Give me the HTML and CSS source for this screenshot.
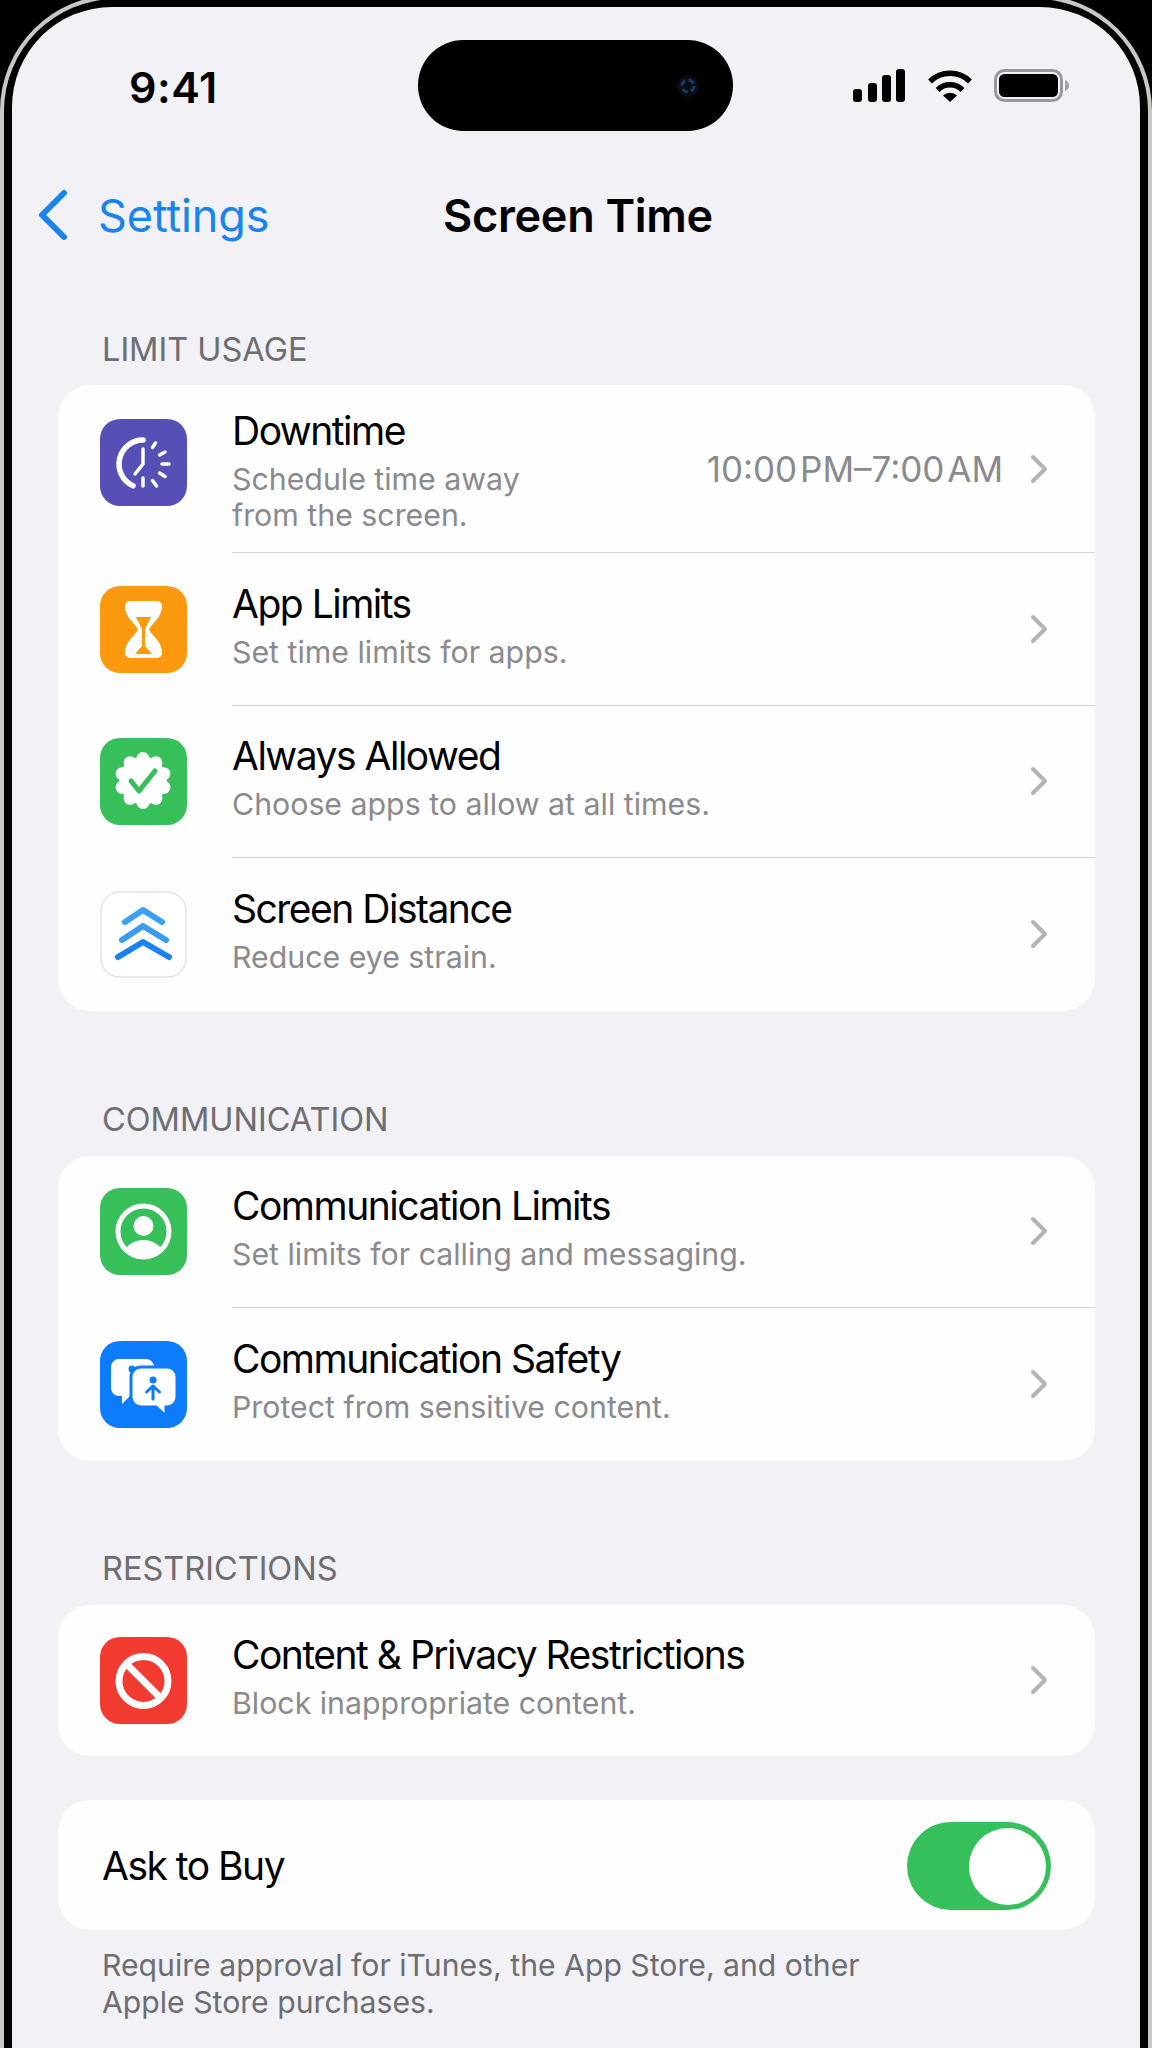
FILE: index.html
```html
<!DOCTYPE html>
<html lang="en">

<head>
    <meta charset="UTF-8">
    <meta name="viewport" content="width=device-width, initial-scale=1.0">
    <title>Screen Time</title>
    <link rel="stylesheet" href="styles.css">
</head>

<body>
    <div class="phone">
        <div class="screen">
            <header class="status">
                <span class="time">9:41</span>
                <div class="island">
                    <svg class="camera" viewBox="0 0 24 24">
                        <circle cx="12" cy="12" r="11" fill="#0a0c14" />
                        <circle cx="12" cy="12" r="6" fill="none" stroke="#1d3768" stroke-width="3" stroke-dasharray="6 3.4" />
                    </svg>
                </div>
                <div class="status-icons">
                    <svg width="52" height="33" viewBox="0 0 52 33" fill="#000">
                        <rect x="0" y="20" width="9" height="13" rx="3" />
                        <rect x="15" y="14" width="9" height="19" rx="3" />
                        <rect x="29" y="6" width="9" height="27" rx="3" />
                        <rect x="43" y="0" width="9" height="33" rx="3" />
                    </svg>
                    <svg width="44" height="33" viewBox="0 0 44 33" fill="none" stroke="#000" stroke-width="5.5">
                        <path d="M2 12.500A28.500 28.500 0 0 1 42 12.500" />
                        <path d="M9.600 21A17.500 17.500 0 0 1 34.400 21" />
                        <path d="M22 33L15 26.500A10 10 0 0 1 29 26.500Z" fill="#000" stroke="none" />
                    </svg>
                    <svg width="75" height="33" viewBox="0 0 75 33">
                        <rect x="1.500" y="1.500" width="66" height="30" rx="9" fill="none" stroke="#98989c" stroke-width="3" />
                        <rect x="5" y="5" width="59" height="23" rx="5.500" fill="#000" />
                        <path d="M71 11c2.500 .6 4 2.800 4 5.500s-1.500 4.900-4 5.500z" fill="#a4a4a8" />
                    </svg>
                </div>
            </header>

            <nav class="nav">
                <a class="back">
                    <svg width="30" height="52" viewBox="0 0 30 52" fill="none" stroke="#1a84ee" stroke-width="6" stroke-linecap="round" stroke-linejoin="round">
                        <path d="M26 4L4 26L26 48" />
                    </svg>
                    Settings
                </a>
                <h1>Screen Time</h1>
            </nav>

            <p class="label label-first">LIMIT USAGE</p>
            <section class="card">
                <div class="row row-tall">
                    <svg class="icon" viewBox="0 0 87 87">
                        <rect width="87" height="87" rx="20" fill="#5650b6" />
                        <g fill="none" stroke="#fff" stroke-linecap="round">
                            <path d="M43 21A24 24 0 0 0 33 66.800" stroke-width="5.500" />
                            <path d="M43 30V45L35 55" stroke-width="3.500" />
                            <path d="M43 59V67M52.500 28.500L55.500 24M59.500 36L65 33M62 45H69M59.500 54L65 57.500M52.500 61.500L56.500 67" stroke-width="3.500" />
                        </g>
                    </svg>
                    <div class="row-body">
                        <div class="text">
                            <div class="title">Downtime</div>
                            <div class="sub">Schedule time away<br>from the screen.</div>
                        </div>
                        <span class="value">10:00 PM–7:00 AM</span>
                        <svg class="chev" viewBox="0 0 18 30"><path d="M3 3L15 15L3 27" /></svg>
                    </div>
                </div>
                <div class="row">
                    <svg class="icon" viewBox="0 0 87 87">
                        <rect width="87" height="87" rx="20" fill="#fb9a0e" />
                        <path d="M30 15H57a5 5 0 0 1 5 5c0 12-10 17-13 23.500c3 6.500 13 11.500 13 23.500a5 5 0 0 1-5 5H30a5 5 0 0 1-5-5c0-12 10-17 13-23.500c-3-6.500-13-11.500-13-23.500a5 5 0 0 1 5-5z" fill="#fff" />
                        <path d="M36 31H51L45 43V60L52 68H35L42 60V43Z" fill="#fb9a0e" />
                    </svg>
                    <div class="row-body">
                        <div class="text">
                            <div class="title">App Limits</div>
                            <div class="sub">Set time limits for apps.</div>
                        </div>
                        <svg class="chev" viewBox="0 0 18 30"><path d="M3 3L15 15L3 27" /></svg>
                    </div>
                </div>
                <div class="row">
                    <svg class="icon" viewBox="0 0 87 87">
                        <rect width="87" height="87" rx="20" fill="#37bf5a" />
                        <g fill="#fff">
                            <circle cx="43" cy="42.500" r="24" />
                            <circle cx="43" cy="20.500" r="6.500" />
                            <circle cx="55.900" cy="24.700" r="6.500" />
                            <circle cx="63.900" cy="35.700" r="6.500" />
                            <circle cx="63.900" cy="49.300" r="6.500" />
                            <circle cx="55.900" cy="60.300" r="6.500" />
                            <circle cx="43" cy="64.500" r="6.500" />
                            <circle cx="30.100" cy="60.300" r="6.500" />
                            <circle cx="22.100" cy="49.300" r="6.500" />
                            <circle cx="22.100" cy="35.700" r="6.500" />
                            <circle cx="30.100" cy="24.700" r="6.500" />
                        </g>
                        <path d="M31 43L39 53L55 33" fill="none" stroke="#37bf5a" stroke-width="5" stroke-linecap="round" stroke-linejoin="round" />
                    </svg>
                    <div class="row-body">
                        <div class="text">
                            <div class="title">Always Allowed</div>
                            <div class="sub">Choose apps to allow at all times.</div>
                        </div>
                        <svg class="chev" viewBox="0 0 18 30"><path d="M3 3L15 15L3 27" /></svg>
                    </div>
                </div>
                <div class="row">
                    <svg class="icon" viewBox="0 0 87 87">
                        <rect x="1" y="1" width="85" height="85" rx="19" fill="#fff" stroke="#e4e4e8" stroke-width="1.500" />
                        <g fill="none" stroke-width="6" stroke-linecap="round" stroke-linejoin="round">
                            <path d="M25 31L43 19L62 31" stroke="#3d9ff2" />
                            <path d="M22 49L43 35L66 49" stroke="#3a9bf1" />
                            <path d="M18 66L43 51L69 66" stroke="#1a82f0" />
                        </g>
                    </svg>
                    <div class="row-body row-last">
                        <div class="text">
                            <div class="title">Screen Distance</div>
                            <div class="sub">Reduce eye strain.</div>
                        </div>
                        <svg class="chev" viewBox="0 0 18 30"><path d="M3 3L15 15L3 27" /></svg>
                    </div>
                </div>
            </section>

            <p class="label">COMMUNICATION</p>
            <section class="card">
                <div class="row">
                    <svg class="icon" viewBox="0 0 87 87">
                        <rect width="87" height="87" rx="20" fill="#37bf5a" />
                        <circle cx="43.500" cy="43.500" r="25.500" fill="none" stroke="#fff" stroke-width="5" />
                        <circle cx="43.500" cy="38" r="10" fill="#fff" />
                        <path d="M26 60Q33 52 43.500 52Q54 52 61 60A25 25 0 0 1 26 60Z" fill="#fff" />
                    </svg>
                    <div class="row-body">
                        <div class="text">
                            <div class="title">Communication Limits</div>
                            <div class="sub">Set limits for calling and messaging.</div>
                        </div>
                        <svg class="chev" viewBox="0 0 18 30"><path d="M3 3L15 15L3 27" /></svg>
                    </div>
                </div>
                <div class="row">
                    <svg class="icon" viewBox="0 0 87 87">
                        <rect width="87" height="87" rx="20" fill="#0c7cfa" />
                        <path d="M19 18H46a8 8 0 0 1 8 8V47a8 8 0 0 1-8 8H30L22 63V55H19a8 8 0 0 1-8-8V26a8 8 0 0 1 8-8z" fill="#fff" />
                        <circle cx="32" cy="28" r="3.500" fill="#0c7cfa" />
                        <path d="M41 26H67a10 10 0 0 1 10 10V56a10 10 0 0 1-10 10H66V75L56 66H41a10 10 0 0 1-10-10V36a10 10 0 0 1 10-10z" fill="#fff" stroke="#0c7cfa" stroke-width="3" />
                        <circle cx="53" cy="39" r="3.500" fill="#0c7cfa" />
                        <path d="M53 45V58M46.500 51L53 45L59.500 51" fill="none" stroke="#0c7cfa" stroke-width="3" stroke-linecap="round" stroke-linejoin="round" />
                    </svg>
                    <div class="row-body row-last">
                        <div class="text">
                            <div class="title">Communication Safety</div>
                            <div class="sub">Protect from sensitive content.</div>
                        </div>
                        <svg class="chev" viewBox="0 0 18 30"><path d="M3 3L15 15L3 27" /></svg>
                    </div>
                </div>
            </section>

            <p class="label label-third">RESTRICTIONS</p>
            <section class="card">
                <div class="row row-short">
                    <svg class="icon" viewBox="0 0 87 87">
                        <rect width="87" height="87" rx="20" fill="#f13b30" />
                        <circle cx="43.500" cy="44" r="24.500" fill="none" stroke="#fff" stroke-width="7" />
                        <path d="M26 26.500L61 61.500" stroke="#fff" stroke-width="7" />
                    </svg>
                    <div class="row-body row-last">
                        <div class="text">
                            <div class="title">Content &amp; Privacy Restrictions</div>
                            <div class="sub">Block inappropriate content.</div>
                        </div>
                        <svg class="chev" viewBox="0 0 18 30"><path d="M3 3L15 15L3 27" /></svg>
                    </div>
                </div>
            </section>

            <section class="card card-toggle">
                <span class="title">Ask to Buy</span>
                <div class="switch">
                    <div class="knob"></div>
                </div>
            </section>
            <p class="footnote">Require approval for iTunes, the App Store, and other<br>Apple Store purchases.</p>
        </div>
    </div>
</body>

</html>
```

FILE: styles.css
```css
* {
    margin: 0;
    padding: 0;
    box-sizing: border-box;
}

body {
    width: 1152px;
    height: 2048px;
    overflow: hidden;
    background-color: #000;
    font-family: Inter, "Liberation Sans", sans-serif;
    color: #000;
}

/* silver edge sits slightly above the top of the picture, bottom is cut off */
.phone {
    height: 2053px;
    margin-top: -5px;
    padding: 8px 8px 0;
    border: 4px solid #c8c8c8;
    border-bottom: none;
    border-radius: 116px 116px 0 0;
}

.screen {
    height: 100%;
    padding: 0 45px 0 46px;
    background-color: #f1f1f6;
    border-radius: 100px 100px 0 0;
}

.status {
    display: flex;
    align-items: center;
    height: 91px;
    margin: 0 -45px 0 -46px;
    position: relative;
    top: 33px;
    padding-left: 117px;
}

.time {
    width: 289px;
    padding-top: 2px;
    font-size: 43px;
    font-weight: 600;
    letter-spacing: 0.5px;
}

.island {
    display: flex;
    align-items: center;
    justify-content: flex-end;
    width: 315px;
    height: 91px;
    padding-right: 33px;
    background-color: #000;
    border-radius: 46px;
}

.camera {
    width: 24px;
    height: 24px;
}

.status-icons {
    display: flex;
    align-items: center;
    margin-left: 120px;
    gap: 23px;
}

.status-icons svg + svg + svg {
    margin-left: -1px;
}

.nav {
    display: grid;
    grid-template-columns: 1fr auto 1fr;
    align-items: center;
    height: 60px;
    margin: 87px -45px 0 -46px;
    padding: 0 26px;
}

.back {
    display: flex;
    align-items: center;
    gap: 30px;
    font-size: 45px;
    letter-spacing: -0.1px;
    color: #1a84ee;
}

.nav h1 {
    margin-left: 4px;
    font-size: 45px;
    font-weight: 600;
    letter-spacing: -0.3px;
}

.label {
    height: 40px;
    margin: 89px 0 16px 44px;
    font-size: 32.5px;
    line-height: 40px;
    color: #6d6d72;
}

.label-first {
    margin-top: 85px;
    margin-bottom: 15px;
}

.label-third {
    margin-top: 88px;
}

.card {
    background-color: #fefefe;
    border-radius: 32px;
    overflow: hidden;
}

.row {
    display: flex;
    align-items: center;
    height: 152.5px;
}

.row-tall {
    height: 168px;
}

.row-short {
    height: 151px;
}

.row-tall .icon {
    margin-top: -14px;
}

.icon {
    flex: none;
    width: 87px;
    height: 87px;
    margin-left: 42px;
    margin-right: 45px;
}

.row-body {
    flex: 1;
    display: flex;
    align-items: center;
    height: 100%;
    padding-right: 47px;
    border-bottom: 1.5px solid #d6d6da;
}

.row-last {
    border-bottom: none;
}

.text {
    flex: 1;
    padding-bottom: 8px;
}

.row-tall .text {
    padding-top: 2px;
    padding-bottom: 0;
}

.title {
    font-size: 39px;
    line-height: 48px;
    letter-spacing: -1.5px;
}

.sub {
    margin-top: 6px;
    font-size: 30.3px;
    line-height: 36px;
    color: #8a8a8e;
}

.value {
    margin-right: 27px;
    font-size: 35px;
    word-spacing: -7px;
    color: #8a8a8e;
}

.chev {
    flex: none;
    width: 18px;
    height: 30px;
    fill: none;
    stroke: #b4b4b8;
    stroke-width: 4px;
    stroke-linecap: round;
    stroke-linejoin: round;
}

.card-toggle {
    display: flex;
    align-items: center;
    justify-content: space-between;
    height: 130px;
    margin-top: 44.5px;
    padding: 2px 44px 0;
}

.switch {
    display: flex;
    justify-content: flex-end;
    align-items: center;
    width: 144px;
    height: 88px;
    padding-right: 5px;
    background-color: #35c05c;
    border-radius: 44px;
}

.knob {
    width: 77px;
    height: 77px;
    background-color: #fff;
    border-radius: 50%;
}

.footnote {
    margin: 17px 0 0 44px;
    font-size: 30.2px;
    line-height: 37px;
    color: #6d6d72;
}
```
